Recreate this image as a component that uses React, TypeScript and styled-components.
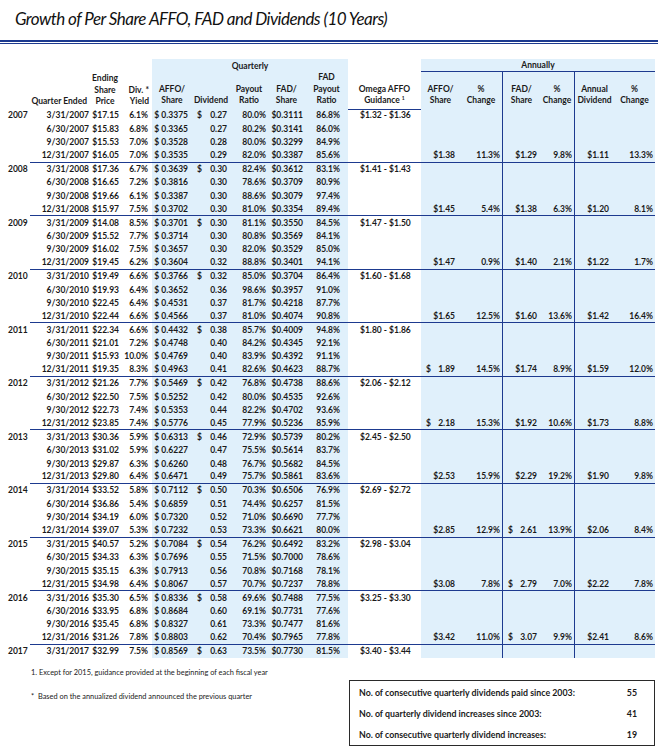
import React from 'react';
import styled, { createGlobalStyle } from 'styled-components';

const NAVY = '#1d3a8f';
const SHADE = '#e0f0fb';
const COLS = '30px 60px 30px 32px 40px 38px 38px 37px 43px 73px 39px 42px 38px 34px 40px 41px';
const FONT = 'Lato, "Liberation Sans", sans-serif';

const GlobalStyle = createGlobalStyle`
  html, body {
    margin: 0;
    padding: 0;
    background: #fff;
  }
  body {
    font-family: ${FONT};
    color: #1a1a1a;
  }
`;

type Align = 'left' | 'right' | 'center';

interface ColSpec {
  pl?: number;
  pr?: number;
  align?: Align;
  head?: Align;
  shade?: boolean;
  divider?: boolean;
  split?: boolean;
}

// one entry per column, left to right
const cols: ColSpec[] = [
  { pl: 8, align: 'left' },
  { pr: 1, head: 'right' },
  { pr: 1 },
  { pr: 4, head: 'right' },
  { pr: 4, shade: true },
  { pl: 5, pr: 3, shade: true, split: true },
  { pr: 2, shade: true },
  { pr: 2, shade: true },
  { pr: 8, shade: true },
  { pl: 12, align: 'left' },
  { pl: 5, pr: 5, shade: true, split: true },
  { pr: 2, shade: true },
  { pl: 5, pr: 3, shade: true, divider: true, split: true },
  { pr: 2, shade: true },
  { pr: 5, shade: true, divider: true },
  { pr: 2, shade: true },
];

const headLabels: string[][] = [
  [],
  ['Quarter Ended'],
  ['Ending', 'Share', 'Price'],
  ['Div. *', 'Yield'],
  ['AFFO/', 'Share'],
  ['Dividend'],
  ['Payout', 'Ratio'],
  ['FAD/', 'Share'],
  ['FAD', 'Payout', 'Ratio'],
  ['Omega AFFO', 'Guidance'],
  ['AFFO/', 'Share'],
  ['%', 'Change'],
  ['FAD/', 'Share'],
  ['%', 'Change'],
  ['Annual', 'Dividend'],
  ['%', 'Change'],
];

interface YearData {
  y: string;
  g: string;
  q: string[][];
  a?: string[];
}

const years: YearData[] = [
  {
    y: '2007', g: '$1.32 - $1.36',
    q: [
      ['3/31/2007', '$17.15', '6.1%', '$ 0.3375', '$ 0.27', '80.0%', '$0.3111', '86.8%'],
      ['6/30/2007', '$15.83', '6.8%', '$ 0.3365', '0.27', '80.2%', '$0.3141', '86.0%'],
      ['9/30/2007', '$15.53', '7.0%', '$ 0.3528', '0.28', '80.0%', '$0.3299', '84.9%'],
      ['12/31/2007', '$16.05', '7.0%', '$ 0.3535', '0.29', '82.0%', '$0.3387', '85.6%'],
    ],
    a: ['$1.38', '11.3%', '$1.29', '9.8%', '$1.11', '13.3%'],
  },
  {
    y: '2008', g: '$1.41 - $1.43',
    q: [
      ['3/31/2008', '$17.36', '6.7%', '$ 0.3639', '$ 0.30', '82.4%', '$0.3612', '83.1%'],
      ['6/30/2008', '$16.65', '7.2%', '$ 0.3816', '0.30', '78.6%', '$0.3709', '80.9%'],
      ['9/30/2008', '$19.66', '6.1%', '$ 0.3387', '0.30', '88.6%', '$0.3079', '97.4%'],
      ['12/31/2008', '$15.97', '7.5%', '$ 0.3702', '0.30', '81.0%', '$0.3354', '89.4%'],
    ],
    a: ['$1.45', '5.4%', '$1.38', '6.3%', '$1.20', '8.1%'],
  },
  {
    y: '2009', g: '$1.47 - $1.50',
    q: [
      ['3/31/2009', '$14.08', '8.5%', '$ 0.3701', '$ 0.30', '81.1%', '$0.3550', '84.5%'],
      ['6/30/2009', '$15.52', '7.7%', '$ 0.3714', '0.30', '80.8%', '$0.3569', '84.1%'],
      ['9/30/2009', '$16.02', '7.5%', '$ 0.3657', '0.30', '82.0%', '$0.3529', '85.0%'],
      ['12/31/2009', '$19.45', '6.2%', '$ 0.3604', '0.32', '88.8%', '$0.3401', '94.1%'],
    ],
    a: ['$1.47', '0.9%', '$1.40', '2.1%', '$1.22', '1.7%'],
  },
  {
    y: '2010', g: '$1.60 - $1.68',
    q: [
      ['3/31/2010', '$19.49', '6.6%', '$ 0.3766', '$ 0.32', '85.0%', '$0.3704', '86.4%'],
      ['6/30/2010', '$19.93', '6.4%', '$ 0.3652', '0.36', '98.6%', '$0.3957', '91.0%'],
      ['9/30/2010', '$22.45', '6.4%', '$ 0.4531', '0.37', '81.7%', '$0.4218', '87.7%'],
      ['12/31/2010', '$22.44', '6.6%', '$ 0.4566', '0.37', '81.0%', '$0.4074', '90.8%'],
    ],
    a: ['$1.65', '12.5%', '$1.60', '13.6%', '$1.42', '16.4%'],
  },
  {
    y: '2011', g: '$1.80 - $1.86',
    q: [
      ['3/31/2011', '$22.34', '6.6%', '$ 0.4432', '$ 0.38', '85.7%', '$0.4009', '94.8%'],
      ['6/30/2011', '$21.01', '7.2%', '$ 0.4748', '0.40', '84.2%', '$0.4345', '92.1%'],
      ['9/30/2011', '$15.93', '10.0%', '$ 0.4769', '0.40', '83.9%', '$0.4392', '91.1%'],
      ['12/31/2011', '$19.35', '8.3%', '$ 0.4963', '0.41', '82.6%', '$0.4623', '88.7%'],
    ],
    a: ['$ 1.89', '14.5%', '$1.74', '8.9%', '$1.59', '12.0%'],
  },
  {
    y: '2012', g: '$2.06 - $2.12',
    q: [
      ['3/31/2012', '$21.26', '7.7%', '$ 0.5469', '$ 0.42', '76.8%', '$0.4738', '88.6%'],
      ['6/30/2012', '$22.50', '7.5%', '$ 0.5252', '0.42', '80.0%', '$0.4535', '92.6%'],
      ['9/30/2012', '$22.73', '7.4%', '$ 0.5353', '0.44', '82.2%', '$0.4702', '93.6%'],
      ['12/31/2012', '$23.85', '7.4%', '$ 0.5776', '0.45', '77.9%', '$0.5236', '85.9%'],
    ],
    a: ['$ 2.18', '15.3%', '$1.92', '10.6%', '$1.73', '8.8%'],
  },
  {
    y: '2013', g: '$2.45 - $2.50',
    q: [
      ['3/31/2013', '$30.36', '5.9%', '$ 0.6313', '$ 0.46', '72.9%', '$0.5739', '80.2%'],
      ['6/30/2013', '$31.02', '5.9%', '$ 0.6227', '0.47', '75.5%', '$0.5614', '83.7%'],
      ['9/30/2013', '$29.87', '6.3%', '$ 0.6260', '0.48', '76.7%', '$0.5682', '84.5%'],
      ['12/31/2013', '$29.80', '6.4%', '$ 0.6471', '0.49', '75.7%', '$0.5861', '83.6%'],
    ],
    a: ['$2.53', '15.9%', '$2.29', '19.2%', '$1.90', '9.8%'],
  },
  {
    y: '2014', g: '$2.69 - $2.72',
    q: [
      ['3/31/2014', '$33.52', '5.8%', '$ 0.7112', '$ 0.50', '70.3%', '$0.6506', '76.9%'],
      ['6/30/2014', '$36.86', '5.4%', '$ 0.6859', '0.51', '74.4%', '$0.6257', '81.5%'],
      ['9/30/2014', '$34.19', '6.0%', '$ 0.7320', '0.52', '71.0%', '$0.6690', '77.7%'],
      ['12/31/2014', '$39.07', '5.3%', '$ 0.7232', '0.53', '73.3%', '$0.6621', '80.0%'],
    ],
    a: ['$2.85', '12.9%', '$ 2.61', '13.9%', '$2.06', '8.4%'],
  },
  {
    y: '2015', g: '$2.98 - $3.04',
    q: [
      ['3/31/2015', '$40.57', '5.2%', '$ 0.7084', '$ 0.54', '76.2%', '$0.6492', '83.2%'],
      ['6/30/2015', '$34.33', '6.3%', '$ 0.7696', '0.55', '71.5%', '$0.7000', '78.6%'],
      ['9/30/2015', '$35.15', '6.3%', '$ 0.7913', '0.56', '70.8%', '$0.7168', '78.1%'],
      ['12/31/2015', '$34.98', '6.4%', '$ 0.8067', '0.57', '70.7%', '$0.7237', '78.8%'],
    ],
    a: ['$3.08', '7.8%', '$ 2.79', '7.0%', '$2.22', '7.8%'],
  },
  {
    y: '2016', g: '$3.25 - $3.30',
    q: [
      ['3/31/2016', '$35.30', '6.5%', '$ 0.8336', '$ 0.58', '69.6%', '$0.7488', '77.5%'],
      ['6/30/2016', '$33.95', '6.8%', '$ 0.8684', '0.60', '69.1%', '$0.7731', '77.6%'],
      ['9/30/2016', '$35.45', '6.8%', '$ 0.8327', '0.61', '73.3%', '$0.7477', '81.6%'],
      ['12/31/2016', '$31.26', '7.8%', '$ 0.8803', '0.62', '70.4%', '$0.7965', '77.8%'],
    ],
    a: ['$3.42', '11.0%', '$ 3.07', '9.9%', '$2.41', '8.6%'],
  },
  {
    y: '2017', g: '$3.40 - $3.44',
    q: [
      ['3/31/2017', '$32.99', '7.5%', '$ 0.8569', '$ 0.63', '73.5%', '$0.7730', '81.5%'],
    ],
  },
];

const stats = [
  ['No. of consecutive quarterly dividends paid since 2003:', '55'],
  ['No. of quarterly dividend increases since 2003:', '41'],
  ['No. of consecutive quarterly dividend increases:', '19'],
];

const Page = styled.div`
  width: 658px;
  height: 747px;
  overflow: hidden;
`;

const Title = styled.h1`
  margin: 0;
  height: 40px;
  padding: 8px 0 0 15px;
  box-sizing: border-box;
  font-family: ${FONT};
  font-style: italic;
  font-weight: 400;
  font-size: 17px;
  line-height: 22px;
  letter-spacing: -0.55px;
  color: #111;
  white-space: nowrap;
`;

const Rule = styled.div`
  height: 1px;
  border-top: 2px solid ${NAVY};
  border-bottom: 1px solid ${NAVY};
  margin-bottom: 15px;
`;

const Table = styled.div`
  font-size: 8.5px;
  font-weight: 700;
`;

const Row = styled.div<{ $h: number }>`
  display: grid;
  grid-template-columns: ${COLS};
  height: ${(p) => p.$h}px;
`;

const Band = styled.div<{ $from: number; $span: number; $line?: boolean }>`
  grid-column: ${(p) => p.$from} / span ${(p) => p.$span};
  background: ${SHADE};
  display: flex;
  align-items: center;
  justify-content: center;
  box-sizing: border-box;
  border-bottom: ${(p) => (p.$line ? `1px solid ${NAVY}` : 'none')};
`;

const Cell = styled.div<{
  $align: Align;
  $pl: number;
  $pr: number;
  $shade?: boolean;
  $divider?: boolean;
  $rule?: boolean;
}>`
  display: flex;
  align-items: center;
  justify-content: ${(p) =>
    p.$align === 'left' ? 'flex-start' : p.$align === 'center' ? 'center' : 'flex-end'};
  padding: 0 ${(p) => p.$pr}px 0 ${(p) => p.$pl}px;
  box-sizing: border-box;
  background: ${(p) => (p.$shade ? SHADE : 'transparent')};
  border-left: ${(p) => (p.$divider ? `1px solid ${NAVY}` : 'none')};
  border-bottom: ${(p) => (p.$rule ? `1px solid ${NAVY}` : 'none')};
  white-space: pre;
  line-height: 1;
`;

const HeadCell = styled(Cell)`
  flex-direction: column;
  justify-content: flex-end;
  align-items: ${(p) =>
    p.$align === 'left' ? 'flex-start' : p.$align === 'center' ? 'center' : 'flex-end'};
  padding-bottom: 2px;
  line-height: 11.5px;
`;

const HeadLine = styled.span`
  display: block;
  white-space: pre;
`;

const Split = styled.span`
  display: flex;
  justify-content: space-between;
  width: 100%;
`;

const Sup = styled.span`
  display: inline-block;
  font-size: 5px;
  line-height: 5px;
  vertical-align: top;
  margin: 1px 0 0 2px;
`;

const Footer = styled.div`
  display: flex;
  margin-top: 1px;
`;

const Notes = styled.div`
  width: 349px;
  padding: 9px 0 0 31px;
  box-sizing: border-box;
  display: flex;
  flex-direction: column;
  gap: 14px;
  font-size: 7.4px;
  font-weight: 400;
  color: #1a1a1a;
`;

const Note = styled.div`
  white-space: nowrap;
  line-height: 10px;
`;

const StatsBox = styled.div`
  margin-top: 21px;
  width: 306px;
  height: 66px;
  box-sizing: border-box;
  border: 1.5px solid #2a2a2a;
  padding: 1px 17px 0 9px;
  display: flex;
  flex-direction: column;
`;

const StatRow = styled.div`
  display: flex;
  justify-content: space-between;
  align-items: center;
  height: 21px;
  font-size: 8.8px;
  font-weight: 700;
`;

const renderValue = (v: string, split?: boolean) => {
  if (split && v.startsWith('$ ')) {
    return (
      <Split>
        <span>$</span>
        <span>{v.slice(2)}</span>
      </Split>
    );
  }
  return v;
};

const HeaderRows = () => (
  <>
    <Row $h={13}>
      <Band $from={5} $span={5}>Quarterly</Band>
      <Band $from={11} $span={6} $line>Annually</Band>
    </Row>
    <Row $h={37}>
      {cols.map((c, i) => {
        const lines = headLabels[i];
        return (
          <HeadCell
            key={i}
            $align={c.head ?? 'center'}
            $pl={0}
            $pr={c.head === 'right' ? 3 : 0}
            $shade={c.shade}
            $divider={c.divider}
            $rule={i >= 4}
          >
            {lines.map((l, li) => (
              <HeadLine key={li}>
                {l}
                {i === 9 && li === lines.length - 1 && <Sup>1</Sup>}
              </HeadLine>
            ))}
          </HeadCell>
        );
      })}
    </Row>
  </>
);

const YearBlock = ({ d }: { d: YearData }) => (
  <>
    {d.q.map((q, qi) => {
      const last = qi === 3;
      const annual = last && d.a ? d.a : ['', '', '', '', '', ''];
      const values = [qi === 0 ? d.y : '', ...q, qi === 0 ? d.g : '', ...annual];
      return (
        <Row $h={13.4} key={qi}>
          {cols.map((c, i) => (
            <Cell
              key={i}
              $align={c.align ?? 'right'}
              $pl={c.pl ?? 0}
              $pr={c.pr ?? 0}
              $shade={c.shade}
              $divider={c.divider}
              $rule={last && i >= 1}
            >
              {renderValue(values[i], c.split)}
            </Cell>
          ))}
        </Row>
      );
    })}
  </>
);

export default function App() {
  return (
    <Page>
      <GlobalStyle />
      <Title>Growth of Per Share AFFO, FAD and Dividends (10 Years)</Title>
      <Rule />
      <Table>
        <HeaderRows />
        {years.map((d) => (
          <YearBlock key={d.y} d={d} />
        ))}
      </Table>
      <Footer>
        <Notes>
          <Note>1. Except for 2015, guidance provided at the beginning of each fiscal year</Note>
          <Note>*&nbsp; Based on the annualized dividend announced the previous quarter</Note>
        </Notes>
        <StatsBox>
          {stats.map(([label, n]) => (
            <StatRow key={n}>
              <span>{label}</span>
              <span>{n}</span>
            </StatRow>
          ))}
        </StatsBox>
      </Footer>
    </Page>
  );
}
